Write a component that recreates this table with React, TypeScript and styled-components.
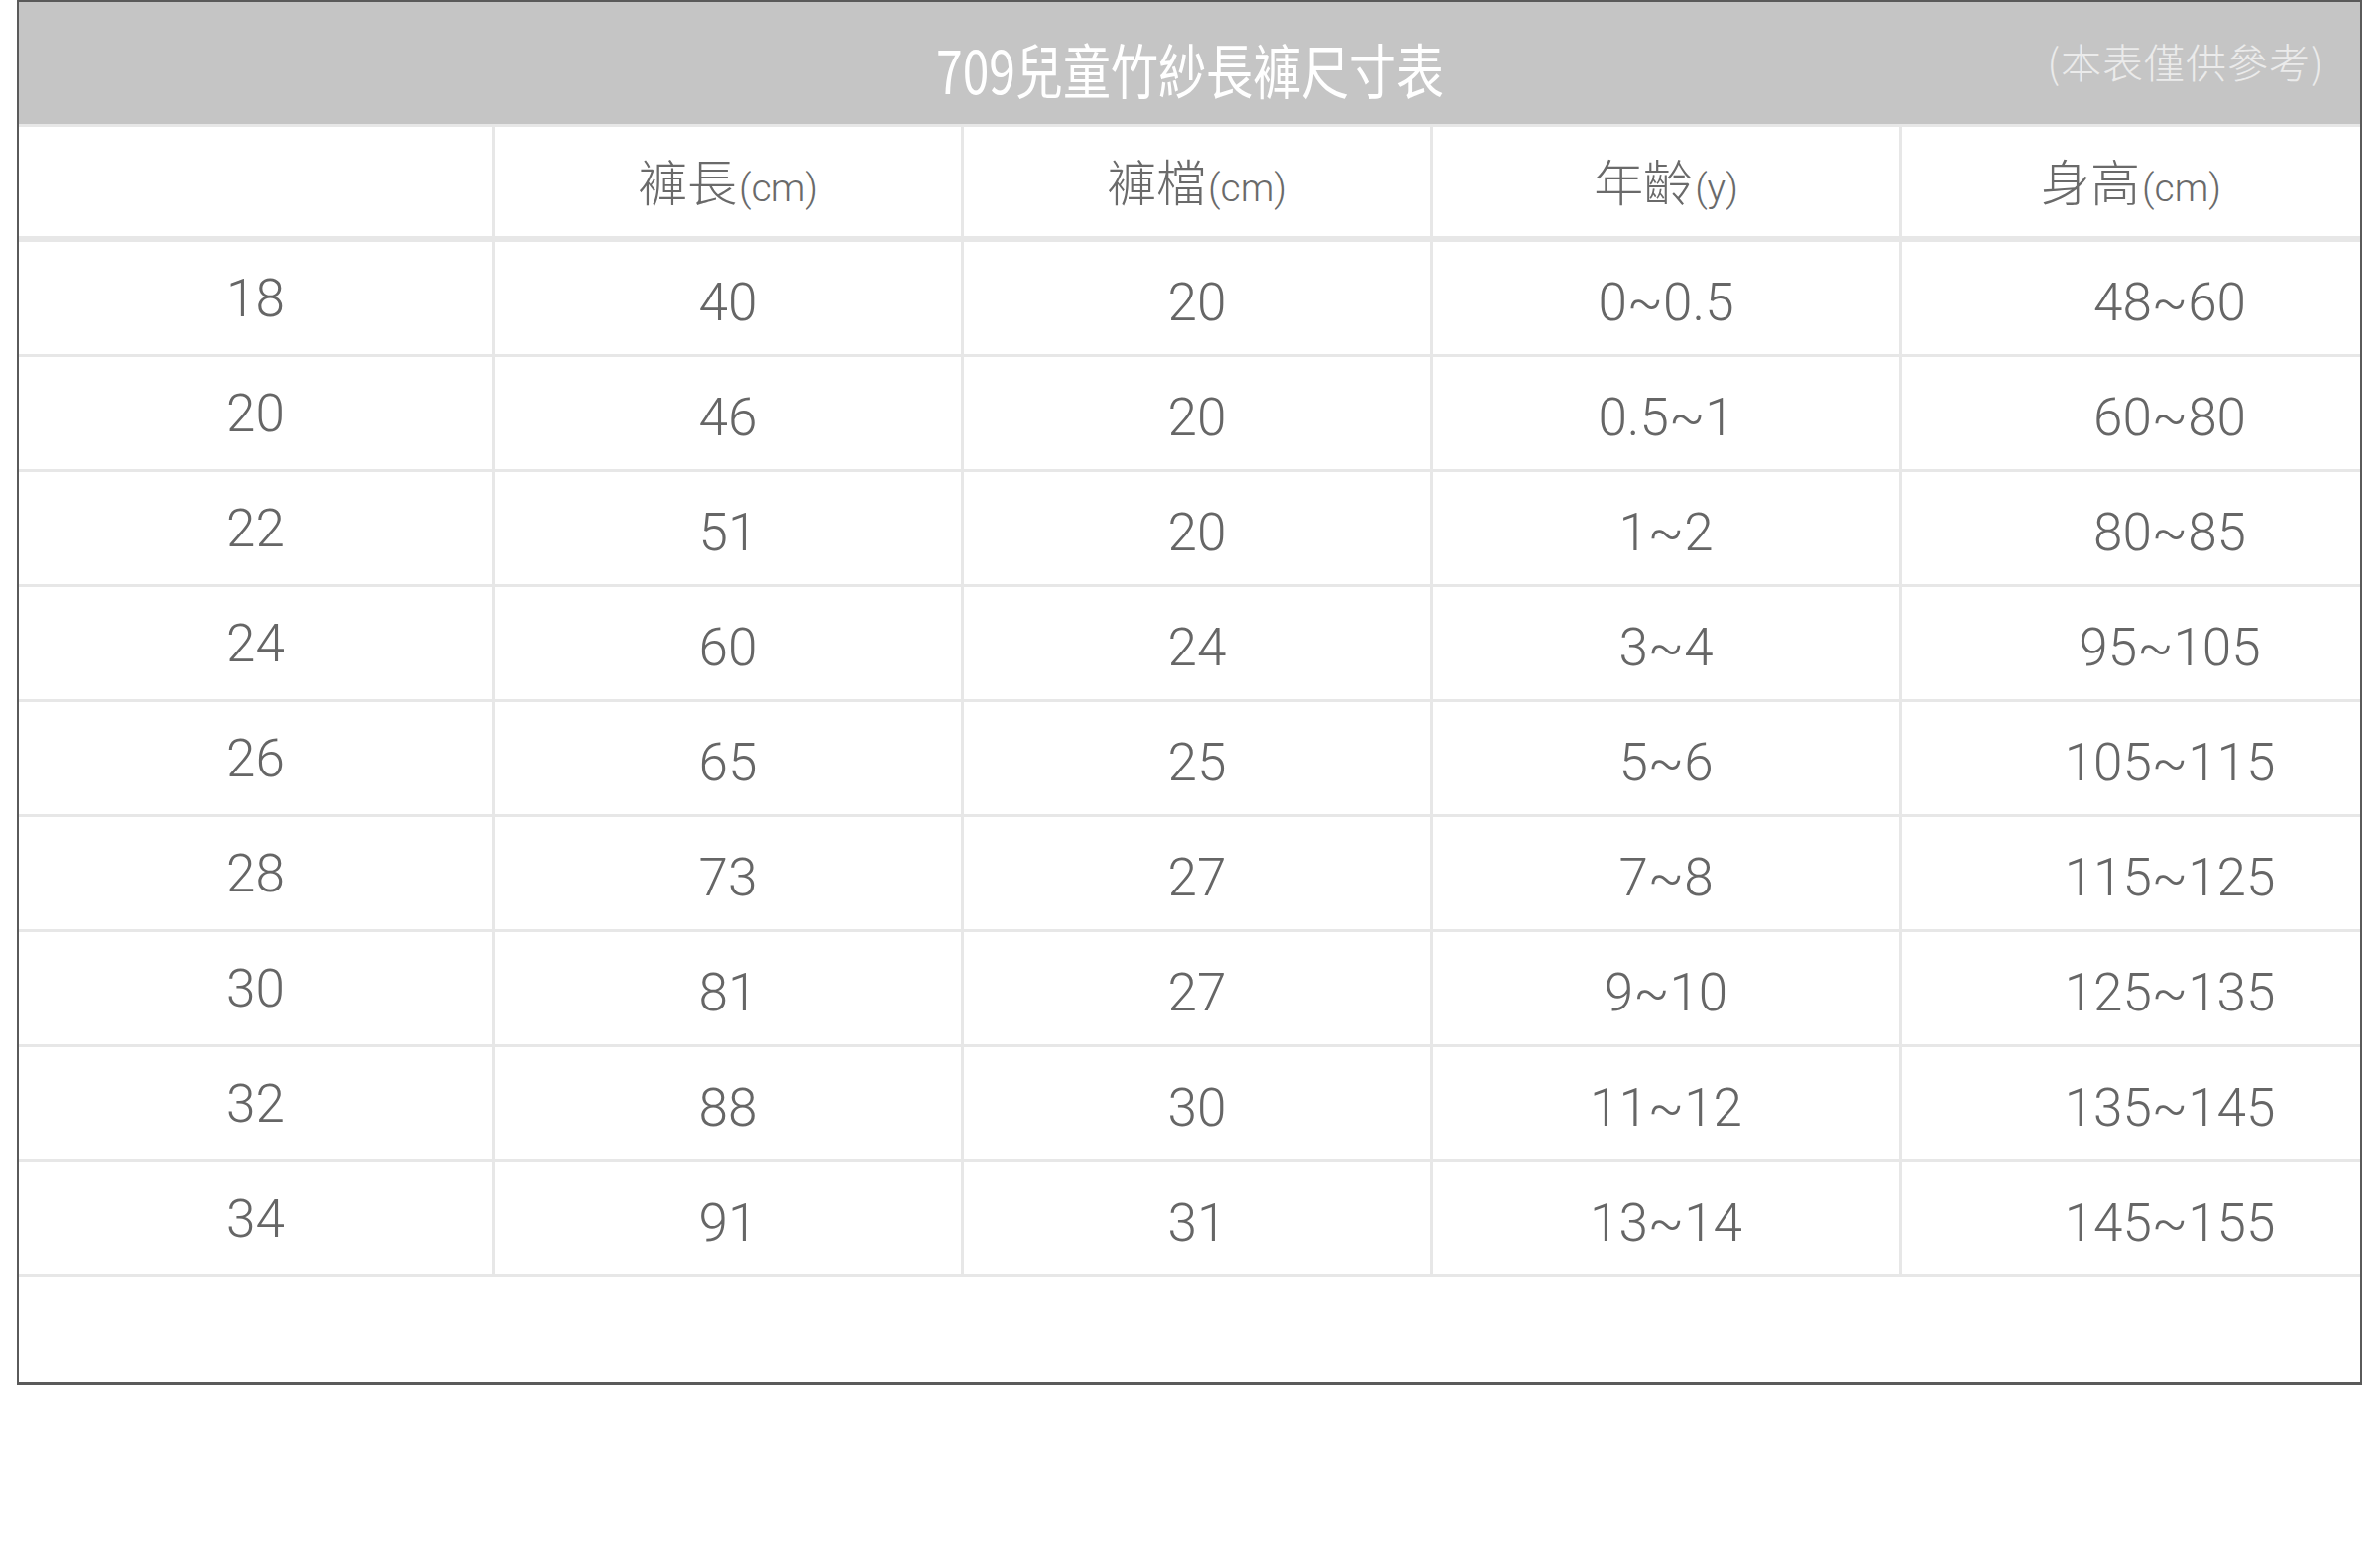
import React from "react";
import styled, { createGlobalStyle } from "styled-components";

const GlobalStyle = createGlobalStyle`
  html, body {
    margin: 0;
    padding: 0;
    background: #ffffff;
  }
  body {
    font-family: "Liberation Sans", "Noto Sans CJK TC", sans-serif;
  }
`;

const headers = [
  { label: "", unit: "" },
  { label: "褲長", unit: "(cm)" },
  { label: "褲檔", unit: "(cm)" },
  { label: "年齡", unit: "(y)" },
  { label: "身高", unit: "(cm)" },
];

const rows: string[][] = [
  ["18", "40", "20", "0~0.5", "48~60"],
  ["20", "46", "20", "0.5~1", "60~80"],
  ["22", "51", "20", "1~2", "80~85"],
  ["24", "60", "24", "3~4", "95~105"],
  ["26", "65", "25", "5~6", "105~115"],
  ["28", "73", "27", "7~8", "115~125"],
  ["30", "81", "27", "9~10", "125~135"],
  ["32", "88", "30", "11~12", "135~145"],
  ["34", "91", "31", "13~14", "145~155"],
];

const App = () => {
  return (
    <Page>
      <GlobalStyle />
      <Frame>
        <TitleBar>
          <span />
          <Title>709兒童竹紗長褲尺寸表</Title>
          <Note>(本表僅供參考)</Note>
        </TitleBar>

        <SizeGrid>
          {headers.map((h, i) => (
            <HeadCell key={"h" + i}>
              <HeadLabel>{h.label}</HeadLabel>
              <HeadUnit>{h.unit}</HeadUnit>
            </HeadCell>
          ))}
          {rows.map((row, r) =>
            row.map((value, c) => (
              <Cell key={r + "-" + c} $first={c === 0} $shift={c === 4}>
                {value}
              </Cell>
            ))
          )}
        </SizeGrid>
      </Frame>
    </Page>
  );
};

export default App;

const Page = styled.div`
  padding-left: 17px;
  width: 2400px;
  height: 1555px;
  box-sizing: border-box;
  background: #ffffff;
`;

const Frame = styled.div`
  width: 2365px;
  height: 1397px;
  box-sizing: border-box;
  border: 2px solid #5a5a5a;
  border-bottom-width: 3px;
  background: #ffffff;
  display: flex;
  flex-direction: column;
`;

const TitleBar = styled.div`
  height: 123px;
  background: #c5c5c5;
  display: grid;
  grid-template-columns: 1fr auto 1fr;
  align-items: center;
`;

const Title = styled.div`
  display: inline-block;
  padding-top: 10px;
  font-family: "Noto Sans CJK TC", "Noto Sans", sans-serif;
  font-size: 60px;
  font-weight: 400;
  color: #ffffff;
  white-space: nowrap;
  transform: scaleX(0.8);
`;

const Note = styled.div`
  justify-self: end;
  padding-right: 36px;
  padding-bottom: 6px;
  font-family: "Noto Sans CJK TC", "Noto Sans", sans-serif;
  font-size: 41px;
  font-weight: 300;
  color: #ebebeb;
  letter-spacing: 1px;
  white-space: nowrap;
`;

const SizeGrid = styled.div`
  display: grid;
  grid-template-columns: 477px 470px 470px 470px 1fr;
  grid-template-rows: 113px repeat(9, 113px);
  gap: 3px;
  padding: 3px 0;
  background: #e7e7e7;
`;

const HeadCell = styled.div`
  background: #ffffff;
  margin-bottom: 3px;
  display: flex;
  align-items: baseline;
  justify-content: center;
  padding-top: 28px;
  box-sizing: border-box;
  color: #6a6a6a;
`;

const HeadLabel = styled.span`
  font-family: "Noto Sans CJK TC", "Noto Sans", sans-serif;
  font-size: 50px;
  font-weight: 300;
  line-height: 1;
`;

const HeadUnit = styled.span`
  font-family: Roboto, "Liberation Sans", sans-serif;
  font-size: 39px;
  font-weight: 300;
  line-height: 1;
  margin-left: 2px;
`;

const Cell = styled.div<{ $first?: boolean; $shift?: boolean }>`
  background: #ffffff;
  display: flex;
  align-items: center;
  justify-content: center;
  box-sizing: border-box;
  padding-top: ${(p) => (p.$first ? "0px" : "8px")};
  padding-left: ${(p) => (p.$shift ? "78px" : "0px")};
  font-family: Roboto, "Liberation Sans", sans-serif;
  font-size: 53px;
  font-weight: 300;
  color: #666666;
  white-space: nowrap;
`;
